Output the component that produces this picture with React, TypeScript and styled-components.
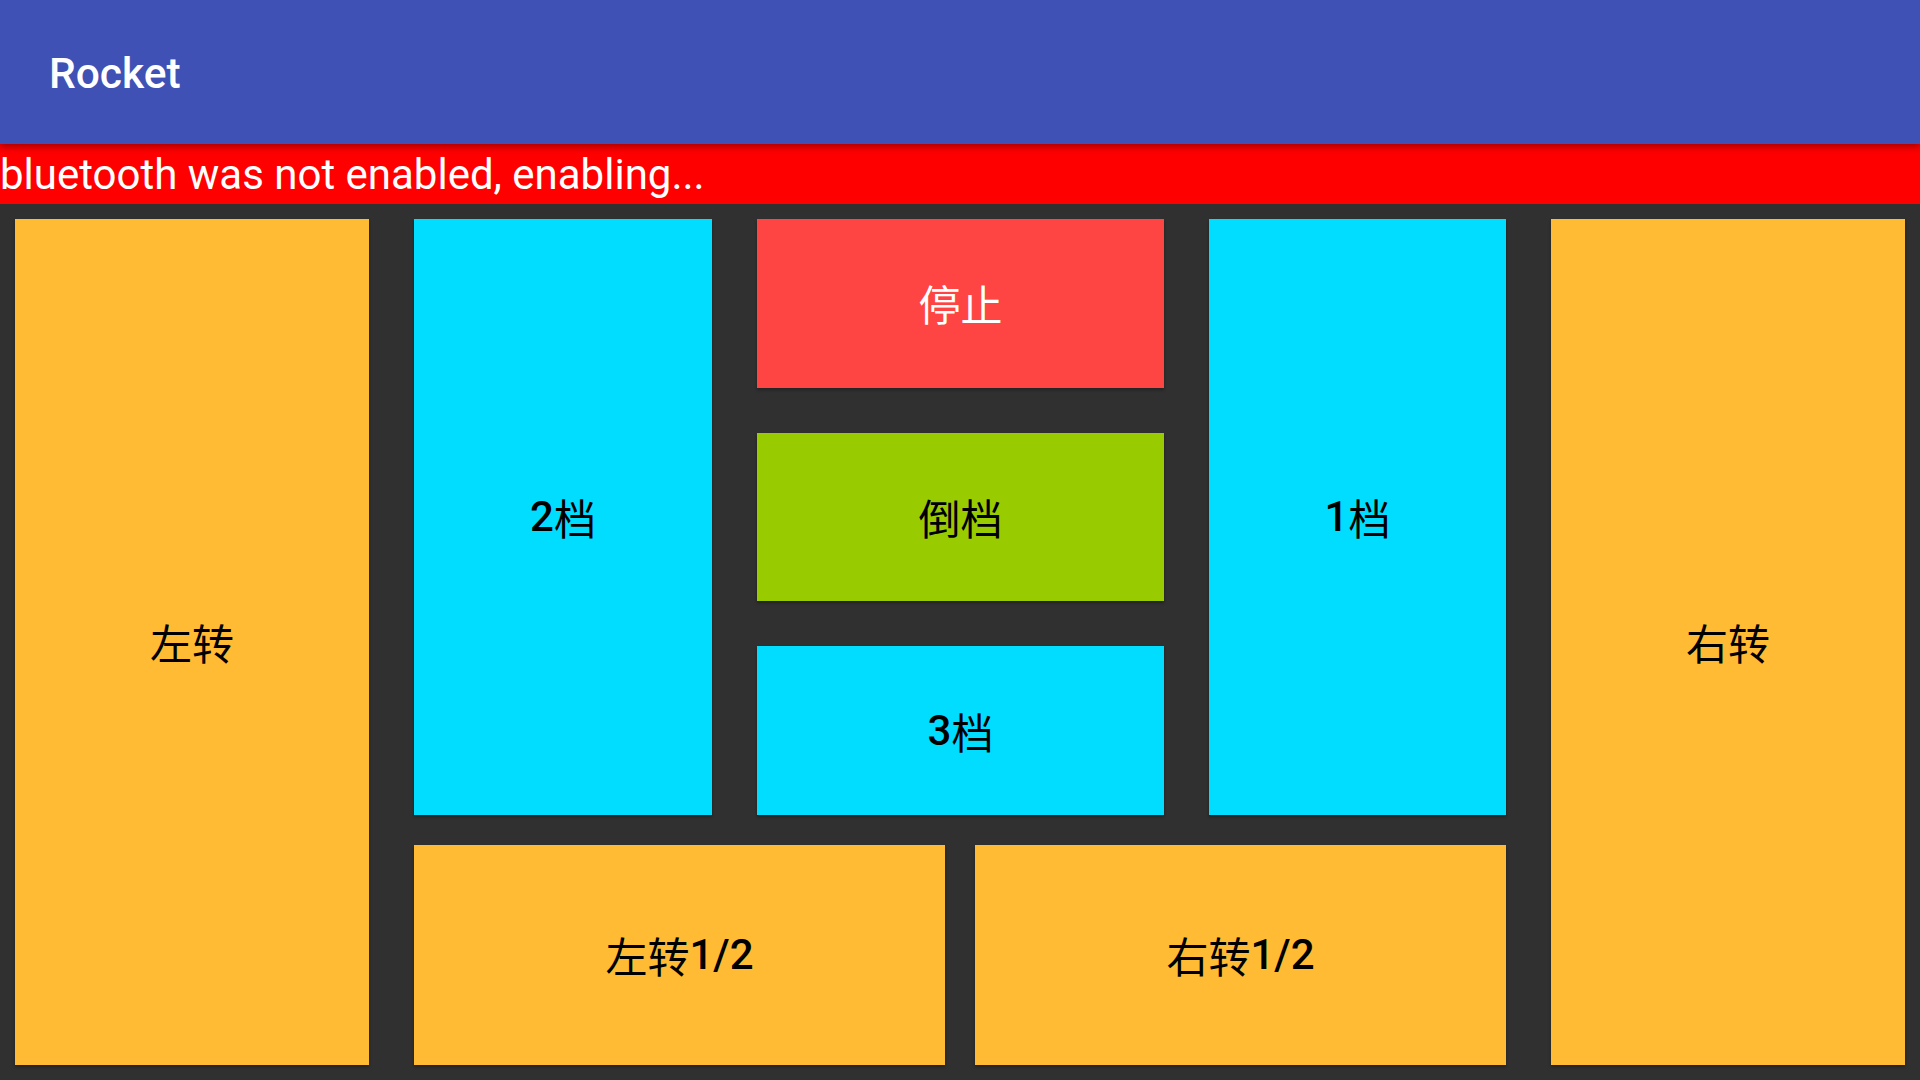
import React from "react";
import styled, { createGlobalStyle } from "styled-components";

const GlobalStyle = createGlobalStyle`
  html, body {
    margin: 0;
    padding: 0;
    width: 1920px;
    height: 1080px;
    overflow: hidden;
    background: #303030;
    font-family: Roboto, "Noto Sans CJK SC", sans-serif;
  }
  * { box-sizing: border-box; }
`;

const Screen = styled.div`
  width: 1920px;
  height: 1080px;
  display: flex;
  flex-direction: column;
  background: #303030;
`;

const Toolbar = styled.header`
  position: relative;
  z-index: 2;
  height: 144px;
  flex: none;
  display: flex;
  align-items: center;
  padding: 3px 0 0 49px;
  background: #3f51b5;
  box-shadow: 0 3px 7px rgba(0, 0, 0, 0.35);
`;

const Title = styled.h1`
  margin: 0;
  color: #ffffff;
  font-family: Roboto, sans-serif;
  font-weight: 500;
  font-size: 42.5px;
`;

const StatusBar = styled.div`
  height: 60px;
  flex: none;
  background: #ff0000;
  color: #ffffff;
  font-family: Roboto, sans-serif;
  font-size: 42px;
  line-height: 62px;
  white-space: nowrap;
  padding-left: 0;
`;

const Pad = styled.main`
  flex: 1;
  display: grid;
  grid-template-columns: 354px 1fr 354px;
  column-gap: 45px;
  padding: 15px;
`;

const Center = styled.div`
  display: grid;
  grid-template-rows: 1fr 220px;
  row-gap: 30px;
`;

const TopRow = styled.div`
  display: grid;
  grid-template-columns: 298px 1fr 297px;
  column-gap: 45px;
`;

const Stack = styled.div`
  display: grid;
  grid-template-rows: 1fr 1fr 1fr;
  row-gap: 45px;
`;

const BottomRow = styled.div`
  display: grid;
  grid-template-columns: 1fr 1fr;
  column-gap: 30px;
`;

const Key = styled.button<{ $bg: string; $fg?: string }>`
  border: none;
  border-radius: 0;
  margin: 0;
  padding: 0 0 1px 0;
  display: flex;
  align-items: center;
  justify-content: center;
  background: ${(p) => p.$bg};
  color: ${(p) => p.$fg ?? "#000000"};
  font-family: Roboto, "Noto Sans CJK SC", sans-serif;
  font-weight: 500;
  font-size: 42px;
  box-shadow: 0 2px 3px rgba(0, 0, 0, 0.3);
  cursor: pointer;
`;

const Han = styled.span`
  font-family: "Noto Sans CJK SC", sans-serif;
  font-weight: 400;
`;

const ORANGE = "#ffbb33";
const CYAN = "#00ddff";
const RED = "#ff4444";
const GREEN = "#99cc00";

export default function App() {
  return (
    <>
      <GlobalStyle />
      <Screen>
        <Toolbar>
          <Title>Rocket</Title>
        </Toolbar>
        <StatusBar>bluetooth was not enabled, enabling...</StatusBar>
        <Pad>
          <Key $bg={ORANGE}><Han>左转</Han></Key>
          <Center>
            <TopRow>
              <Key $bg={CYAN}>2<Han>档</Han></Key>
              <Stack>
                <Key $bg={RED} $fg="#ffffff"><Han>停止</Han></Key>
                <Key $bg={GREEN}><Han>倒档</Han></Key>
                <Key $bg={CYAN}>3<Han>档</Han></Key>
              </Stack>
              <Key $bg={CYAN}>1<Han>档</Han></Key>
            </TopRow>
            <BottomRow>
              <Key $bg={ORANGE}><Han>左转</Han>1/2</Key>
              <Key $bg={ORANGE}><Han>右转</Han>1/2</Key>
            </BottomRow>
          </Center>
          <Key $bg={ORANGE}><Han>右转</Han></Key>
        </Pad>
      </Screen>
    </>
  );
}
